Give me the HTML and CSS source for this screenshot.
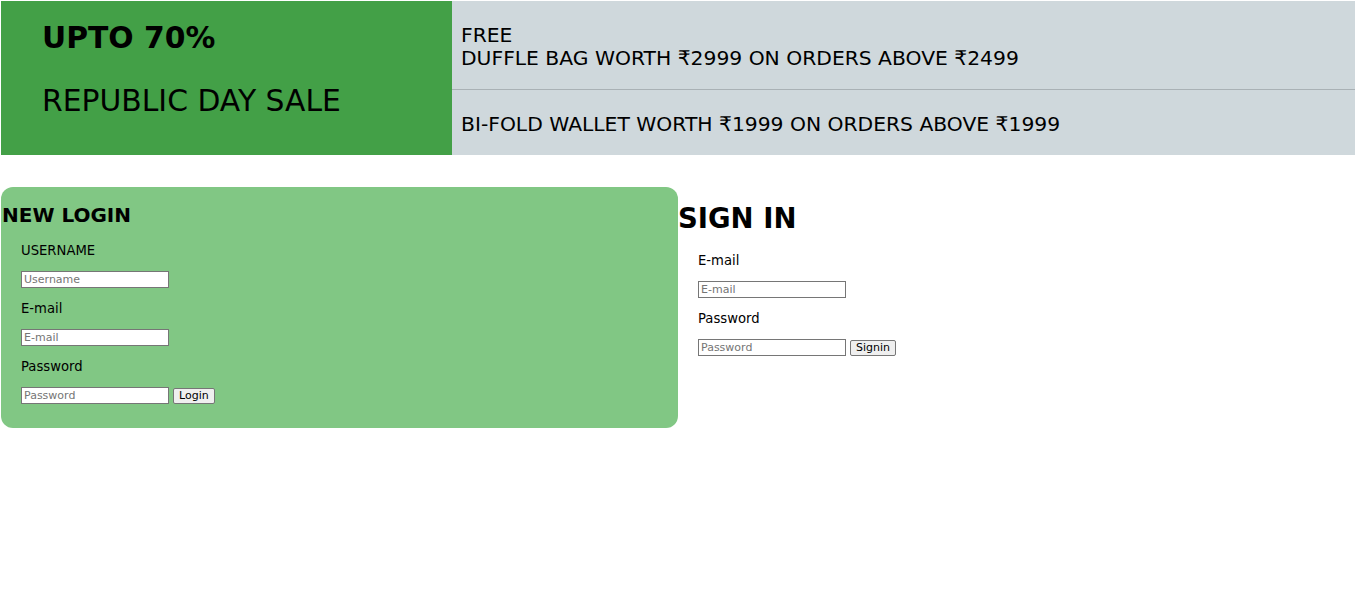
FILE: index.html
```html
<!DOCTYPE html>
<html lang="en">
<head>
<meta charset="utf-8">
<title>Republic Day Sale</title>
<link rel="stylesheet" href="styles.css">
</head>
<body>
<div class="page">
  <header class="banner">
    <div class="sale">
      <div class="sale-pct">UPTO 70%</div>
      <div class="sale-name">REPUBLIC DAY SALE</div>
    </div>
    <div class="offers">
      <div class="offer">
        <div>FREE</div>
        <div>DUFFLE BAG WORTH ₹2999 ON ORDERS ABOVE ₹2499</div>
      </div>
      <div class="offer">
        <div>BI-FOLD WALLET WORTH ₹1999 ON ORDERS ABOVE ₹1999</div>
      </div>
    </div>
  </header>

  <main class="forms">
    <section class="panel panel-new">
      <h3 class="panel-title">NEW LOGIN</h3>
      <div class="fields">
        <label class="field-label" for="nu">USERNAME</label>
        <div class="field-row"><input class="field" id="nu" type="text" placeholder="Username"></div>
        <label class="field-label" for="ne">E-mail</label>
        <div class="field-row"><input class="field" id="ne" type="text" placeholder="E-mail"></div>
        <label class="field-label" for="np">Password</label>
        <div class="field-row"><input class="field" id="np" type="password" placeholder="Password"><button class="btn" type="button">Login</button></div>
      </div>
    </section>
    <section class="panel panel-sign">
      <h2 class="sign-title">SIGN IN</h2>
      <div class="fields">
        <label class="field-label" for="se">E-mail</label>
        <div class="field-row"><input class="field" id="se" type="text" placeholder="E-mail"></div>
        <label class="field-label" for="sp">Password</label>
        <div class="field-row"><input class="field" id="sp" type="password" placeholder="Password"><button class="btn" type="button">Signin</button></div>
      </div>
    </section>
  </main>
</div>
</body>
</html>
```
FILE: styles.css
```css
* { box-sizing: border-box; }
html, body { margin: 0; padding: 0; background: #fff; }
body {
  padding: 1px;
  font-family: "DejaVu Sans", Verdana, sans-serif;
  color: #000;
}
.page { width: 1354px; }

.banner {
  display: flex;
  height: 154px;
}
.sale {
  width: 451px;
  background: #43a047;
  padding: 19px 0 0 41px;
  font-size: 29.8px;
}
.sale-pct { font-weight: bold; line-height: 36px; }
.sale-name { margin-top: 27px; line-height: 36px; }

.offers {
  flex: 1;
  display: flex;
  flex-direction: column;
  background: #cfd8dc;
}
.offer {
  display: flex;
  flex-direction: column;
  justify-content: center;
  padding: 4px 0 0 9px;
  font-size: 20.3px;
  line-height: 23px;
}
.offer:first-child { height: 89px; border-bottom: 1px solid #a9b1b5; }
.offer:last-child { flex: 1; }

.forms {
  display: flex;
  margin-top: 32px;
}
.panel { width: 50%; }
.panel-new {
  background: #81c784;
  border-radius: 12px;
  padding: 16px 0 24px 0;
}
.panel-title {
  margin: 0 0 15px 1px;
  font-size: 20px;
  line-height: 24px;
  font-weight: bold;
}
.panel-sign { padding-top: 15px; }
.sign-title {
  margin: 0 0 17px 0;
  font-size: 27.5px;
  line-height: 33px;
  font-weight: bold;
}
.fields {
  display: flex;
  flex-direction: column;
  gap: 12px;
  padding-left: 20px;
  font-size: 13.2px;
}
.field-label { line-height: 17px; }
.field-row { display: flex; align-items: center; gap: 4px; height: 17px; }
.field {
  width: 148px;
  height: 17px;
  margin: 0;
  padding: 0 2px;
  border: 1px solid #767676;
  background: #fff;
  font-family: "DejaVu Sans", Verdana, sans-serif;
  font-size: 11px;
  color: #000;
}
.field::placeholder { color: #757575; }
.btn {
  height: 16px;
  margin: 0;
  padding: 0 5px;
  border: 1px solid #767676;
  border-radius: 2px;
  background: #efefef;
  font-family: "DejaVu Sans", Verdana, sans-serif;
  font-size: 11px;
  line-height: 14px;
  color: #000;
}
```
